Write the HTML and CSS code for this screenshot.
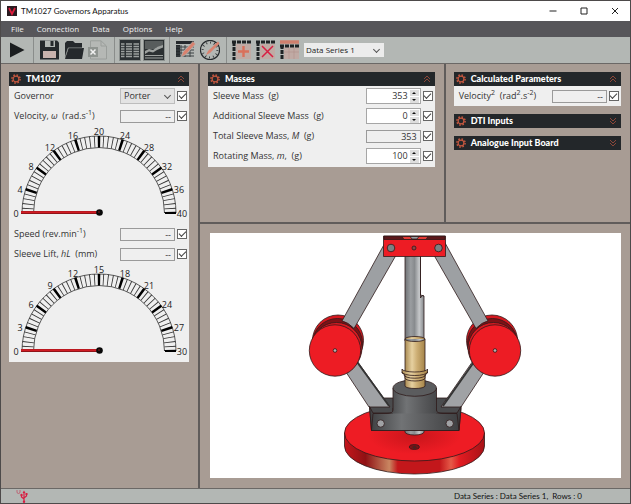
FILE: index.html
```html
<!DOCTYPE html>
<html lang="en">
<head>
<meta charset="utf-8">
<title>TM1027 Governors Apparatus</title>
<link rel="stylesheet" href="styles.css">
</head>
<body>
<svg class="defs" width="0" height="0" aria-hidden="true">
  <defs>
    <symbol id="gear" viewBox="0 0 10 10">
      <circle cx="5" cy="5" r="4.1" fill="none" stroke="#c4573f" stroke-width="1.5" stroke-dasharray="1.61 1.61"/>
      <circle cx="5" cy="5" r="2.9" fill="none" stroke="#c4573f" stroke-width="1.2"/>
    </symbol>
    <symbol id="chevrons" viewBox="0 0 8 8">
      <path d="M1 4 L4 1 L7 4 M1 7 L4 4 L7 7" fill="none" stroke="#8c4638" stroke-width="1"/>
    </symbol>
    <symbol id="dial" viewBox="0 0 180 98">
      <path d="M13 87 A77 77 0 0 1 167 87 M24.500 87 A65.500 65.500 0 0 1 155.500 87" fill="none" stroke="#333" stroke-width=".8"/>
      <path d="M18.700 87 A71.300 71.300 0 0 1 161.300 87" pathLength="50" fill="none" stroke="#333" stroke-width="11.500" stroke-dasharray=".19 .81" stroke-dashoffset=".095"/>
      <path d="M18.700 87 A71.300 71.300 0 0 1 161.300 87" pathLength="10" fill="none" stroke="#000" stroke-width="11.500" stroke-dasharray=".11 .89" stroke-dashoffset=".055"/>
      <path d="M156 87 H167" stroke="#000" stroke-width="2"/>
      <path d="M12 86.500 H90" stroke="#7c1216" stroke-width="3.200"/>
      <path d="M12 86.300 H90" stroke="#d01c24" stroke-width="2"/>
      <circle cx="90.500" cy="86.500" r="3.300" fill="#080808"/>
      <circle cx="90" cy="86" r="1" fill="#5a1515"/>
    </symbol>
  </defs>
</svg>
<div class="window">
  <header class="titlebar">
    <svg class="app-icon" viewBox="0 0 10 10"><rect width="10" height="10" fill="#2a1b20"/><path d="M2 2 L5 8 L8 2" fill="none" stroke="#e01b3c" stroke-width="1.700"/></svg>
    <h1>TM1027 Governors Apparatus</h1>
    <div class="window-buttons">
      <button aria-label="Minimize"><svg viewBox="0 0 8 8"><path d="M.5 4 H7.500"/></svg></button>
      <button aria-label="Maximize"><svg viewBox="0 0 8 8"><path d="M1 1 H7 V7 H1 Z"/></svg></button>
      <button aria-label="Close"><svg viewBox="0 0 8 8"><path d="M1 1 L7 7 M7 1 L1 7"/></svg></button>
    </div>
  </header>
  <nav class="menubar">
    <button>File</button><button>Connection</button><button>Data</button><button>Options</button><button>Help</button>
  </nav>
  <div class="toolbar">
    <div class="group">
      <button class="tool" aria-label="Start"><svg viewBox="0 0 20 20"><path d="M3 2.500 L17.500 10 L3 17.500 Z" fill="#1b1e20"/></svg></button>
    </div>
    <div class="group">
      <button class="tool" aria-label="Save"><svg viewBox="0 0 20 20"><path d="M0 .5 H17 L19 2.500 V19.500 H0 Z" fill="#25292c"/><path d="M5 .5 H15 V7 H5 Z" fill="#b3b7b4"/><path d="M10.500 1 H13.500 V6 H10.500 Z" fill="#25292c"/><path d="M3 11 H16 V18 H3 Z" fill="#c9b3ae"/></svg></button>
      <button class="tool" aria-label="Open"><svg viewBox="0 0 20 20"><path d="M1 18 V3 L3 1 H9 L11 3 H18 V8 H4 Z" fill="#25292c"/><path d="M4.500 8 H20 L18 19 H1 Z" fill="#25292c"/><path d="M1 17 L4.300 7.800 H18" fill="none" stroke="#8e9390" stroke-width=".7"/></svg></button>
      <button class="tool" aria-label="Export to Excel"><svg viewBox="0 0 20 20"><path d="M2.500 .8 H13 L18.500 6 V19 H2.500 Z" fill="#b5b8b5" stroke="#9a9e9b"/><path d="M13 1 V6 H18" fill="none" stroke="#9a9e9b"/><rect y="7" width="10" height="10" fill="#8f9490"/><path d="M2.500 9.500 L7.500 14.500 M7.500 9.500 L2.500 14.500" stroke="#f2f2f2" stroke-width="1.500"/></svg></button>
    </div>
    <div class="group toggles">
      <button class="tool on" aria-label="Show table" aria-pressed="true"><svg viewBox="0 0 20 20"><path d="M0 0 H20 V20 H0 Z" fill="#2b3032"/><path d="M1 4 H4.500 M6 4 H12 M13.500 4 H19 M1 6.500 H4.500 M6 6.500 H12 M13.500 6.500 H19 M1 9 H4.500 M6 9 H12 M13.500 9 H19 M1 11.500 H4.500 M6 11.500 H12 M13.500 11.500 H19 M1 14 H4.500 M6 14 H12 M13.500 14 H19 M1 16.500 H4.500 M6 16.500 H12 M13.500 16.500 H19" stroke="#9da19f" stroke-width="1.500"/></svg></button>
      <button class="tool on" aria-label="Show chart" aria-pressed="true"><svg viewBox="0 0 20 20"><path d="M0 0 H20 V20 H0 Z" fill="#2b3032"/><path d="M1 2 H19 M1 4 H19 M1 6 H19 M1 8 H12" stroke="#858a88" stroke-width="1.100"/><path d="M1 11 L5 9 L9 10 L13 7 L19 5 V7.500 L13 10 L9 12.500 L5 11.500 L1 14 Z" fill="#9da19f"/><path d="M1 15.500 H19 M1 18 H19" stroke="#9da19f" stroke-width="1.200"/></svg></button>
    </div>
    <div class="group">
      <button class="tool" aria-label="Edit table"><svg viewBox="0 0 20 20"><path d="M0 1 H18 V4 H0 Z M0 5 H4 V17 H0 Z" fill="#25292c"/><path d="M0 7 H18 M0 10 H18 M0 13 H18 M0 16 H18 M5 5 V17 M9 5 V17 M14 5 V17" stroke="#3d4244" stroke-width="1"/><path d="M5 17 L7 12 L17 1.500 L19.500 4 L10 14.500 Z" fill="#d9826f" stroke="#b3b7b4" stroke-width=".7"/></svg></button>
      <button class="tool" aria-label="Edit gauge"><svg viewBox="0 0 20 20"><circle cx="10" cy="10" r="9.600" fill="none" stroke="#25292c" stroke-width="1.200"/><circle cx="10" cy="10" r="7.400" fill="none" stroke="#25292c" stroke-width="2" stroke-dasharray=".8 3.070"/><path d="M6 15 L8 11 L18 1.500 L19.500 3.500 L10 13 Z" fill="#d9826f"/></svg></button>
    </div>
    <div class="group last">
      <button class="tool" aria-label="Add series"><svg viewBox="0 0 20 20"><rect x="4" y="4" width="15" height="15" fill="#c0aaa4"/><path d="M0 2 H19 M2 2 V20" fill="none" stroke="#1e2224" stroke-width="3" stroke-dasharray="4 1"/><path d="M11.500 6 V17 M6 11.500 H17" stroke="#d9705b" stroke-width="2.400"/></svg></button>
      <button class="tool" aria-label="Delete series"><svg viewBox="0 0 20 20"><rect x="4" y="4" width="15" height="15" fill="#c0aaa4"/><path d="M0 2 H19 M2 2 V20" fill="none" stroke="#1e2224" stroke-width="3" stroke-dasharray="4 1"/><path d="M6 6 L17 17 M17 6 L6 17" stroke="#d81e42" stroke-width="1.500"/></svg></button>
      <button class="tool" aria-label="Rename series"><svg viewBox="0 0 20 20"><rect x="4" y="7" width="15" height="12" fill="#c0aaa4"/><path d="M0 2 H19" stroke="#cf7f6d" stroke-width="3.500"/><path d="M0 6 H19 M2 5 V20" fill="none" stroke="#1e2224" stroke-width="3" stroke-dasharray="4 1"/><path d="M4 12 H19 M9 8 V19 M14 8 V19" stroke="#b0918a" stroke-width=".6"/></svg></button>
      <span class="picker series"><select aria-label="Data series"><option>Data Series 1</option></select></span>
    </div>
  </div>
  <main>
    <aside class="pane">
      <section class="card">
        <h2><svg class="gear"><use href="#gear"/></svg>TM1027<button aria-label="Collapse"><svg><use href="#chevrons"/></svg></button></h2>
        <div class="row"><label for="gov">Governor</label><span class="picker"><select id="gov"><option>Porter</option></select></span><input type="checkbox" aria-label="Log governor" checked></div>
        <div class="row"><label for="vel">Velocity, <i>ω</i>&nbsp; (rad.s<sup>-1</sup>)</label><input class="field" id="vel" value="--" readonly><input type="checkbox" aria-label="Log velocity" checked></div>
        <svg class="gauge" viewBox="0 0 180 98"><use href="#dial"/><g><text x="7" y="91">0</text><text x="11" y="67">4</text><text x="22" y="44">8</text><text x="41" y="25">12</text><text x="64" y="13">16</text><text x="90" y="9">20</text><text x="116" y="13">24</text><text x="140" y="25">28</text><text x="158" y="44">32</text><text x="170" y="67">36</text><text x="173" y="91">40</text></g></svg>
        <div class="row"><label for="spd">Speed (rev.min<sup>-1</sup>)</label><input class="field" id="spd" value="--" readonly><input type="checkbox" aria-label="Log speed" checked></div>
        <div class="row"><label for="lift">Sleeve Lift, <i>hL</i>&nbsp; (mm)</label><input class="field" id="lift" value="--" readonly><input type="checkbox" aria-label="Log sleeve lift" checked></div>
        <svg class="gauge" viewBox="0 0 180 98"><use href="#dial"/><g><text x="7" y="91">0</text><text x="11" y="67">3</text><text x="22" y="44">6</text><text x="41" y="25">9</text><text x="64" y="13">12</text><text x="90" y="9">15</text><text x="116" y="13">18</text><text x="140" y="25">21</text><text x="158" y="44">24</text><text x="170" y="67">27</text><text x="173" y="91">30</text></g></svg>
      </section>
    </aside>
    <div class="workspace">
      <div class="upper">
        <div class="pane">
          <section class="card masses">
            <h2><svg class="gear"><use href="#gear"/></svg>Masses<button aria-label="Collapse"><svg><use href="#chevrons"/></svg></button></h2>
            <div class="row"><label for="m1">Sleeve Mass&nbsp; (g)</label><span class="spinner"><input id="m1" type="number" value="353"><span class="arrows"><button aria-label="Increase"></button><button class="down" aria-label="Decrease"></button></span></span><input type="checkbox" aria-label="Log sleeve mass" checked></div>
            <div class="row"><label for="m2">Additional Sleeve Mass&nbsp; (g)</label><span class="spinner"><input id="m2" type="number" value="0"><span class="arrows"><button aria-label="Increase"></button><button class="down" aria-label="Decrease"></button></span></span><input type="checkbox" aria-label="Log additional sleeve mass" checked></div>
            <div class="row"><label for="m3">Total Sleeve Mass, <i>M</i>&nbsp; (g)</label><input class="field" id="m3" value="353" readonly><input type="checkbox" aria-label="Log total sleeve mass" checked></div>
            <div class="row"><label for="m4">Rotating Mass, <i>m</i>,&nbsp; (g)</label><span class="spinner"><input id="m4" type="number" value="100"><span class="arrows"><button aria-label="Increase"></button><button class="down" aria-label="Decrease"></button></span></span><input type="checkbox" aria-label="Log rotating mass" checked></div>
          </section>
        </div>
        <div class="pane">
          <section class="card">
            <h2><svg class="gear"><use href="#gear"/></svg>Calculated Parameters<button aria-label="Collapse"><svg><use href="#chevrons"/></svg></button></h2>
            <div class="row"><label for="v2">Velocity<sup>2</sup>&nbsp; (rad<sup>2</sup>.s<sup>-2</sup>)</label><input class="field" id="v2" value="--" readonly><input type="checkbox" aria-label="Log velocity squared" checked></div>
          </section>
          <section class="card"><h2><svg class="gear"><use href="#gear"/></svg>DTI Inputs<button class="closed" aria-label="Expand"><svg><use href="#chevrons"/></svg></button></h2></section>
          <section class="card"><h2><svg class="gear"><use href="#gear"/></svg>Analogue Input Board<button class="closed" aria-label="Expand"><svg><use href="#chevrons"/></svg></button></h2></section>
        </div>
      </div>
      <div class="pane lower">
        <svg class="apparatus" viewBox="210 233 411 245" role="img" aria-label="Porter governor">
          <defs>
            <linearGradient id="steel"><stop offset="0" stop-color="#6f7275"/><stop offset=".3" stop-color="#9a9da0"/><stop offset=".5" stop-color="#888b8e"/><stop offset=".75" stop-color="#c6c8ca"/><stop offset="1" stop-color="#85888b"/></linearGradient>
            <linearGradient id="brass"><stop offset="0" stop-color="#a98a52"/><stop offset=".35" stop-color="#e6d0a0"/><stop offset=".6" stop-color="#cdae74"/><stop offset="1" stop-color="#a58449"/></linearGradient>
            <linearGradient id="iron"><stop offset="0" stop-color="#3e3f41"/><stop offset=".35" stop-color="#717375"/><stop offset=".65" stop-color="#58595b"/><stop offset="1" stop-color="#3d3e40"/></linearGradient>
            <linearGradient id="rim"><stop offset="0" stop-color="#c5151b"/><stop offset=".15" stop-color="#8f1114"/><stop offset=".32" stop-color="#c98661"/><stop offset=".38" stop-color="#c3171b"/><stop offset=".68" stop-color="#c3171b"/><stop offset=".76" stop-color="#e55a48"/><stop offset=".82" stop-color="#e31c22"/><stop offset="1" stop-color="#a81217"/></linearGradient>
            <radialGradient id="face" cx=".5" cy=".55" r=".55"><stop offset="0" stop-color="#c9151b"/><stop offset=".6" stop-color="#ee1c24"/><stop offset="1" stop-color="#ee1c24"/></radialGradient>
            <g id="ball"><circle cx="338" cy="340.500" r="25.500" fill="#d5181f"/><circle cx="337.500" cy="343.500" r="25" fill="#7d1216"/><circle cx="336.500" cy="348" r="25.500" fill="#d71920"/></g>
            <g id="disc"><circle cx="335" cy="350.500" r="25.700" fill="#ed1c24"/><circle cx="335" cy="350.500" r="1.800" fill="#b6b0b0"/></g>
          </defs>
          <g stroke="#2e1b1b" stroke-width=".8" stroke-linejoin="round">
            <path d="M344.500 433 V446 A70 28 0 0 0 484.500 446 V433 Z" fill="url(#rim)"/>
            <ellipse cx="414.500" cy="433" rx="70" ry="28" fill="url(#face)"/>
            <ellipse cx="414.300" cy="447" rx="5" ry="2.400" fill="#7d1216"/>
            <path d="M412 447 L415 445.500 L417 448 L414 449 Z" fill="#4a2220" stroke="none"/>
            <path d="M405 428 V432 A9.500 3 0 0 0 424 432 V428 Z" fill="url(#steel)"/>
            <path d="M369.500 406.500 L380 398 H450 L461 406.500 V409 L459 430.500 H371.500 Z" fill="#4a4b4d"/>
            <path d="M342 366 L355 358 L390 407 H374 L369 407 Z" fill="#a0a2a5"/>
            <path d="M357 362 L389 406" stroke="#333" stroke-width="1.800"/>
            <path d="M488 366 L475 358 L441 407 H456 L461 407 Z" fill="#a0a2a5"/>
            <path d="M474 362 L443 406" stroke="#333" stroke-width="1.800"/>
            <use href="#ball"/>
            <use href="#ball" transform="translate(830 0) scale(-1 1)"/>
            <path d="M386 241 L342 321 Q348 322 354 328.500 L399 250 Z" fill="#9da0a3"/>
            <path d="M444 241 L488 321 Q482 322 476 328.500 L431 250 Z" fill="#9da0a3"/>
            <use href="#disc"/>
            <use href="#disc" transform="translate(830 0) scale(-1 1)"/>
            <path d="M405 254 H420.500 V295 L424 296 V341 H405 Z" fill="url(#steel)"/>
            <path d="M420.500 254 V298 Q422 294 424 296" fill="none"/>
            <path d="M383.500 236 H445.500 V256.500 H383.500 Z" fill="#ed1c24"/>
            <path d="M384 236.300 H445 V239.500 H384 Z" fill="#5c1719"/>
            <path d="M402 236.500 H428 L426 239.500 H404 Z" fill="#e63a35"/>
            <path d="M410 236.500 H419 L417 239 H412 Z" fill="#9b9da0"/>
            <circle cx="391" cy="248" r="3.800" fill="#7d8083"/><circle cx="438.500" cy="248" r="3.800" fill="#7d8083"/><circle cx="414" cy="248" r="2" fill="#8f4444"/>
            <path d="M369.500 406.500 L373 413 L393 413 V408 H436 V413 L457 413 L461 406.500 L459 430.500 H371.500 Z" fill="url(#iron)"/>
            <path d="M393 388 V410 Q393 413.500 387 413.500 H443 Q436.500 413.500 436.500 410 V388 Z" fill="url(#iron)" stroke="none"/>
            <path d="M393 388 V410 Q393 413.500 387 413.500 H373 L371.500 430.500 M436.500 388 V410 Q436.500 413.500 443 413.500 H457 L459 430.500" fill="none"/>
            <ellipse cx="414.700" cy="388" rx="21.700" ry="8.300" fill="#5b5c5e"/>
            <circle cx="380.700" cy="423.500" r="3.700" fill="#a0a2a5"/><circle cx="449.700" cy="423.500" r="3.700" fill="#a0a2a5"/>
            <path d="M405 339 A10 2.500 0 0 1 425 339 V386 A10 2.500 0 0 1 405 386 Z" fill="url(#brass)"/>
            <path d="M405 339 A10 2.500 0 0 0 425 339" fill="url(#steel)"/>
            <path d="M402 369 A12.700 3 0 0 0 427.500 369 V373 L425 375 V378 A10 3 0 0 1 405 378 V375 L402 373 Z" fill="url(#brass)"/>
            <path d="M402 372 A12.700 3.500 0 0 0 427.500 372 M404 375 A10 3 0 0 0 425.500 375" fill="none"/>
          </g>
        </svg>
      </div>
    </div>
  </main>
  <footer>
    <svg class="usb" viewBox="0 0 12 13"><path d="M1 0 V2 Q1 3.500 2.500 3.500 Q4 3.500 4 2 V0" fill="none" stroke="#c2455c" stroke-width=".7"/><path d="M8 2 V12 M5.500 5 V7 L8 9 M10.500 4 V6 L8 8" fill="none" stroke="#d81e42" stroke-width="1.200"/><path d="M6.500 3 L8 .5 L9.500 3 Z M9.500 3 H11.500 V5 H9.500 Z" fill="#d81e42"/><circle cx="5.500" cy="5" r="1.200" fill="#d81e42"/><circle cx="8" cy="11.700" r="1.200" fill="#d81e42"/></svg>
    <p>Data Series : Data Series 1,&nbsp; Rows : 0</p>
  </footer>
</div>
</body>
</html>
```
FILE: styles.css
```css
* { box-sizing: border-box; margin: 0; padding: 0; }
body { font: 9px/12px "Open Sans", "Noto Sans", sans-serif; color: #333; }
button, input, select { font: inherit; color: inherit; border: 0; border-radius: 0; background: none; }
svg { display: block; }
.defs { position: absolute; }

.window { display: flex; flex-direction: column; min-height: 100vh; border: 1px solid #4d4a4a; background: #a89c94; }

.titlebar { display: flex; align-items: center; gap: 4px; height: 20px; padding-left: 6px; background: #fff; }
.app-icon { width: 10px; height: 10px; }
h1 { flex: 1; font: 400 8px/12px Lato, "Open Sans", sans-serif; color: #111; }
.window-buttons { display: flex; }
.window-buttons button { display: grid; place-items: center; width: 31px; height: 20px; }
.window-buttons svg { width: 8px; height: 8px; fill: none; stroke: #222; stroke-width: 1; }

.menubar { display: flex; align-items: center; gap: 13px; height: 16px; padding-left: 10px; background: #57565a; color: #f0f0f0; font-size: 8px; }

.toolbar { display: flex; align-items: center; height: 27px; background: #b3b7b4; border-bottom: 1px solid #6b6866; }
.group { display: flex; align-items: center; gap: 4px; height: 26px; padding: 0 6px; border-right: 1px solid #8a8d8b; }
.toggles { gap: 2px; padding: 0 4px; }
.last { border-right: 0; padding: 0 5px; }
.tool { display: grid; place-items: center; width: 20px; height: 22px; }
.tool svg { width: 20px; height: 20px; }
.on { width: 22px; background: #8b908e; }

.picker { position: relative; display: block; width: 55px; }
.picker select { display: block; appearance: none; width: 100%; height: 16px; padding: 0 3px; background: #e3e3e3; border: 1px solid #bdbdbd; }
.picker::after { content: ""; position: absolute; right: 5px; top: 5px; width: 4px; height: 4px; border: solid #555; border-width: 0 1px 1px 0; transform: rotate(45deg); pointer-events: none; }
.series { width: 80px; font-size: 8px; }
.series select { height: 14px; padding: 0 1px; background: #ececec; border-color: #ececec; color: #222; }
.series::after { top: 4px; }

main { flex: 1; display: flex; }
.pane { padding: 8px 9px 8px 8px; }
aside.pane { flex: 0 0 199px; border-right: 2px solid #605c5b; }
.workspace { flex: 1; display: flex; flex-direction: column; }
.upper { display: grid; grid-template-columns: 17fr 13fr; min-height: 160px; border-bottom: 2px solid #605c5b; }
.upper .pane + .pane { border-left: 2px solid #605c5b; }
.lower { flex: 1; padding: 9px 9px 10px 10px; }
.apparatus { width: 100%; background: #fff; }

.card { background: #efefef; }
.card + .card { margin-top: 8px; }
.masses { padding-bottom: 1px; }
h2 { display: flex; align-items: center; gap: 5px; height: 14px; padding: 0 4px 0 2px; background: #23272a; color: #fff; font: 900 9px/12px Lato, "Open Sans", sans-serif; }
.gear { width: 10px; height: 10px; }
h2 button { margin-left: auto; }
h2 button svg { width: 8px; height: 8px; }
.closed svg { transform: scaleY(-1); }

.row { display: flex; align-items: center; gap: 2px; height: 20px; padding: 0 2px 0 5px; }
.row label { flex: 1; white-space: nowrap; }
sup { font-size: 7px; line-height: 0; vertical-align: 4px; }
.field { width: 55px; height: 13px; padding: 0 3px; text-align: right; border: 1px solid #9a9a9a; }
.spinner { display: flex; align-items: center; width: 55px; height: 16px; padding-right: 1px; background: #fff; border: 1px solid #a6a6a6; }
.spinner input { flex: 1; min-width: 0; text-align: right; padding-right: 2px; appearance: textfield; }
.spinner input::-webkit-inner-spin-button { display: none; }
.arrows { display: grid; gap: 1px; }
.arrows button { display: grid; place-items: center; width: 9px; height: 6px; background: #dedede; }
.arrows button::before { content: ""; border: solid transparent; border-width: 0 2px 2px; border-bottom-color: #111; }
.arrows .down::before { transform: scaleY(-1); }
input[type="checkbox"] { appearance: none; display: grid; place-items: center; width: 10px; height: 10px; background: #fff; border: 1px solid #666; }
input[type="checkbox"]:checked::before { content: ""; width: 6px; height: 3px; border: solid #444; border-width: 0 0 1px 1px; transform: translateY(-1px) rotate(-45deg); }

.gauge { width: 100%; overflow: visible; }
.gauge text { font-size: 9px; text-anchor: middle; fill: #222; }

footer { display: flex; align-items: center; justify-content: space-between; height: 15px; padding: 0 48px 0 15px; background: #b3b7b4; border-top: 1px solid #6b6866; font: 8px/12px Lato, "Open Sans", sans-serif; color: #111; }
.usb { width: 12px; height: 13px; }
```
